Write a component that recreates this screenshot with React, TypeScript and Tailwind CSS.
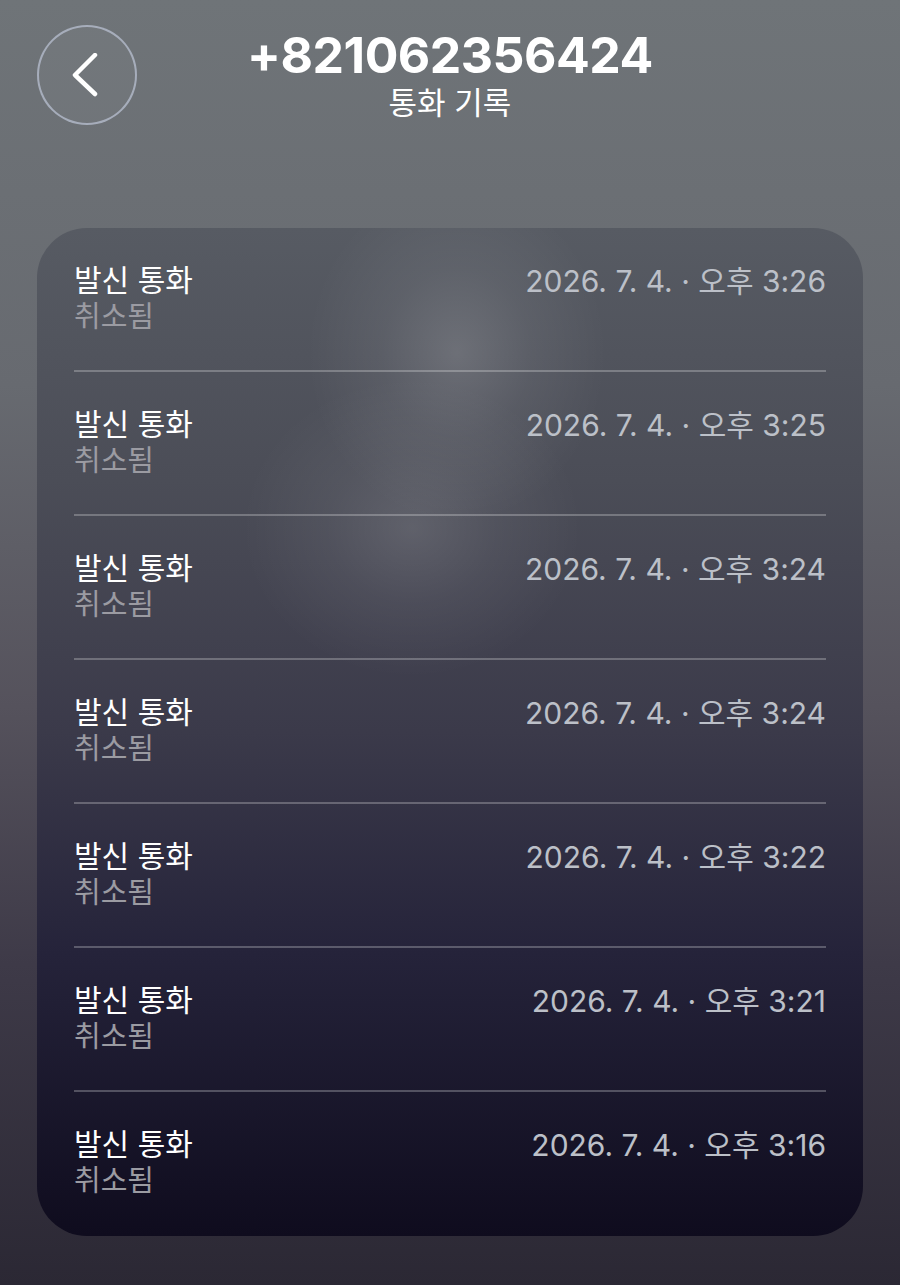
const calls = [
    { title: '발신 통화', status: '취소됨', time: '2026. 7. 4. · 오후 3:26' },
    { title: '발신 통화', status: '취소됨', time: '2026. 7. 4. · 오후 3:25' },
    { title: '발신 통화', status: '취소됨', time: '2026. 7. 4. · 오후 3:24' },
    { title: '발신 통화', status: '취소됨', time: '2026. 7. 4. · 오후 3:24' },
    { title: '발신 통화', status: '취소됨', time: '2026. 7. 4. · 오후 3:22' },
    { title: '발신 통화', status: '취소됨', time: '2026. 7. 4. · 오후 3:21' },
    { title: '발신 통화', status: '취소됨', time: '2026. 7. 4. · 오후 3:16' },
]

const BackButton: React.FC = () => {
    return (
        <button className="mt-[25px] w-[100px] h-[100px] rounded-full border-2 border-[#b4bccc]/80 bg-white/[0.03] flex items-center justify-center">
            <svg width="44" height="44" viewBox="0 0 44 44" fill="none">
                <path d="M30 2 L10 22 L30 41" stroke="white" strokeWidth="4.5" strokeLinecap="round" strokeLinejoin="round" />
            </svg>
        </button>
    )
}

const CallRow: React.FC<{ title: string, status: string, time: string, last: boolean }> = ({ title, status, time, last }) => {
    return (
        <div className={`flex flex-col px-[37px] ${last ? 'flex-1' : 'h-[144px]'}`}>
            <div className="flex justify-between pt-[34px]">
                <div className="flex flex-col">
                    <span className="text-[30px] leading-[36px] text-white">{title}</span>
                    <span className="text-[29px] leading-[38px] text-[#9b9ba2]">{status}</span>
                </div>
                <span className="text-[30px] leading-[38px] text-[#bcc0c8] whitespace-pre">{time}</span>
            </div>
            {!last && <div className="mt-auto h-[2px] bg-white/25" />}
        </div>
    )
}

const App: React.FC = () => {
    return (
        <div className="w-[900px] h-[1285px] overflow-hidden font-['Inter','Noto_Sans_CJK_KR',sans-serif] bg-[linear-gradient(180deg,#6f7478_0%,#676a70_30%,#55525c_55%,#3e3a48_75%,#2b2834_100%)]">
            <div className="grid grid-cols-[100px_1fr_100px] px-[37px]">
                <BackButton />
                <div className="flex flex-col items-center pt-[27px]">
                    <h1 className="text-[50px] leading-[56px] font-bold text-white tracking-[-0.5px]">+821062356424</h1>
                    <p className="mt-[1px] text-[31px] leading-[38px] text-white">통화 기록</p>
                </div>
                <div />
            </div>

            <div className="mx-[37px] mt-[103px] h-[1008px] rounded-[50px] overflow-hidden flex flex-col bg-[radial-gradient(ellipse_150px_170px_at_420px_125px,rgba(255,255,255,0.16),rgba(255,255,255,0.06)_50%,transparent),radial-gradient(ellipse_170px_150px_at_375px_300px,rgba(255,255,255,0.13),rgba(255,255,255,0.05)_50%,transparent),linear-gradient(180deg,#575b63_0%,#4b4d57_25%,#3b3a4a_50%,#25233a_72%,#0f0c1e_100%)]">
                {calls.map((c, i) => (
                    <CallRow key={i} title={c.title} status={c.status} time={c.time} last={i === calls.length - 1} />
                ))}
            </div>
        </div>
    )
}

export default App
